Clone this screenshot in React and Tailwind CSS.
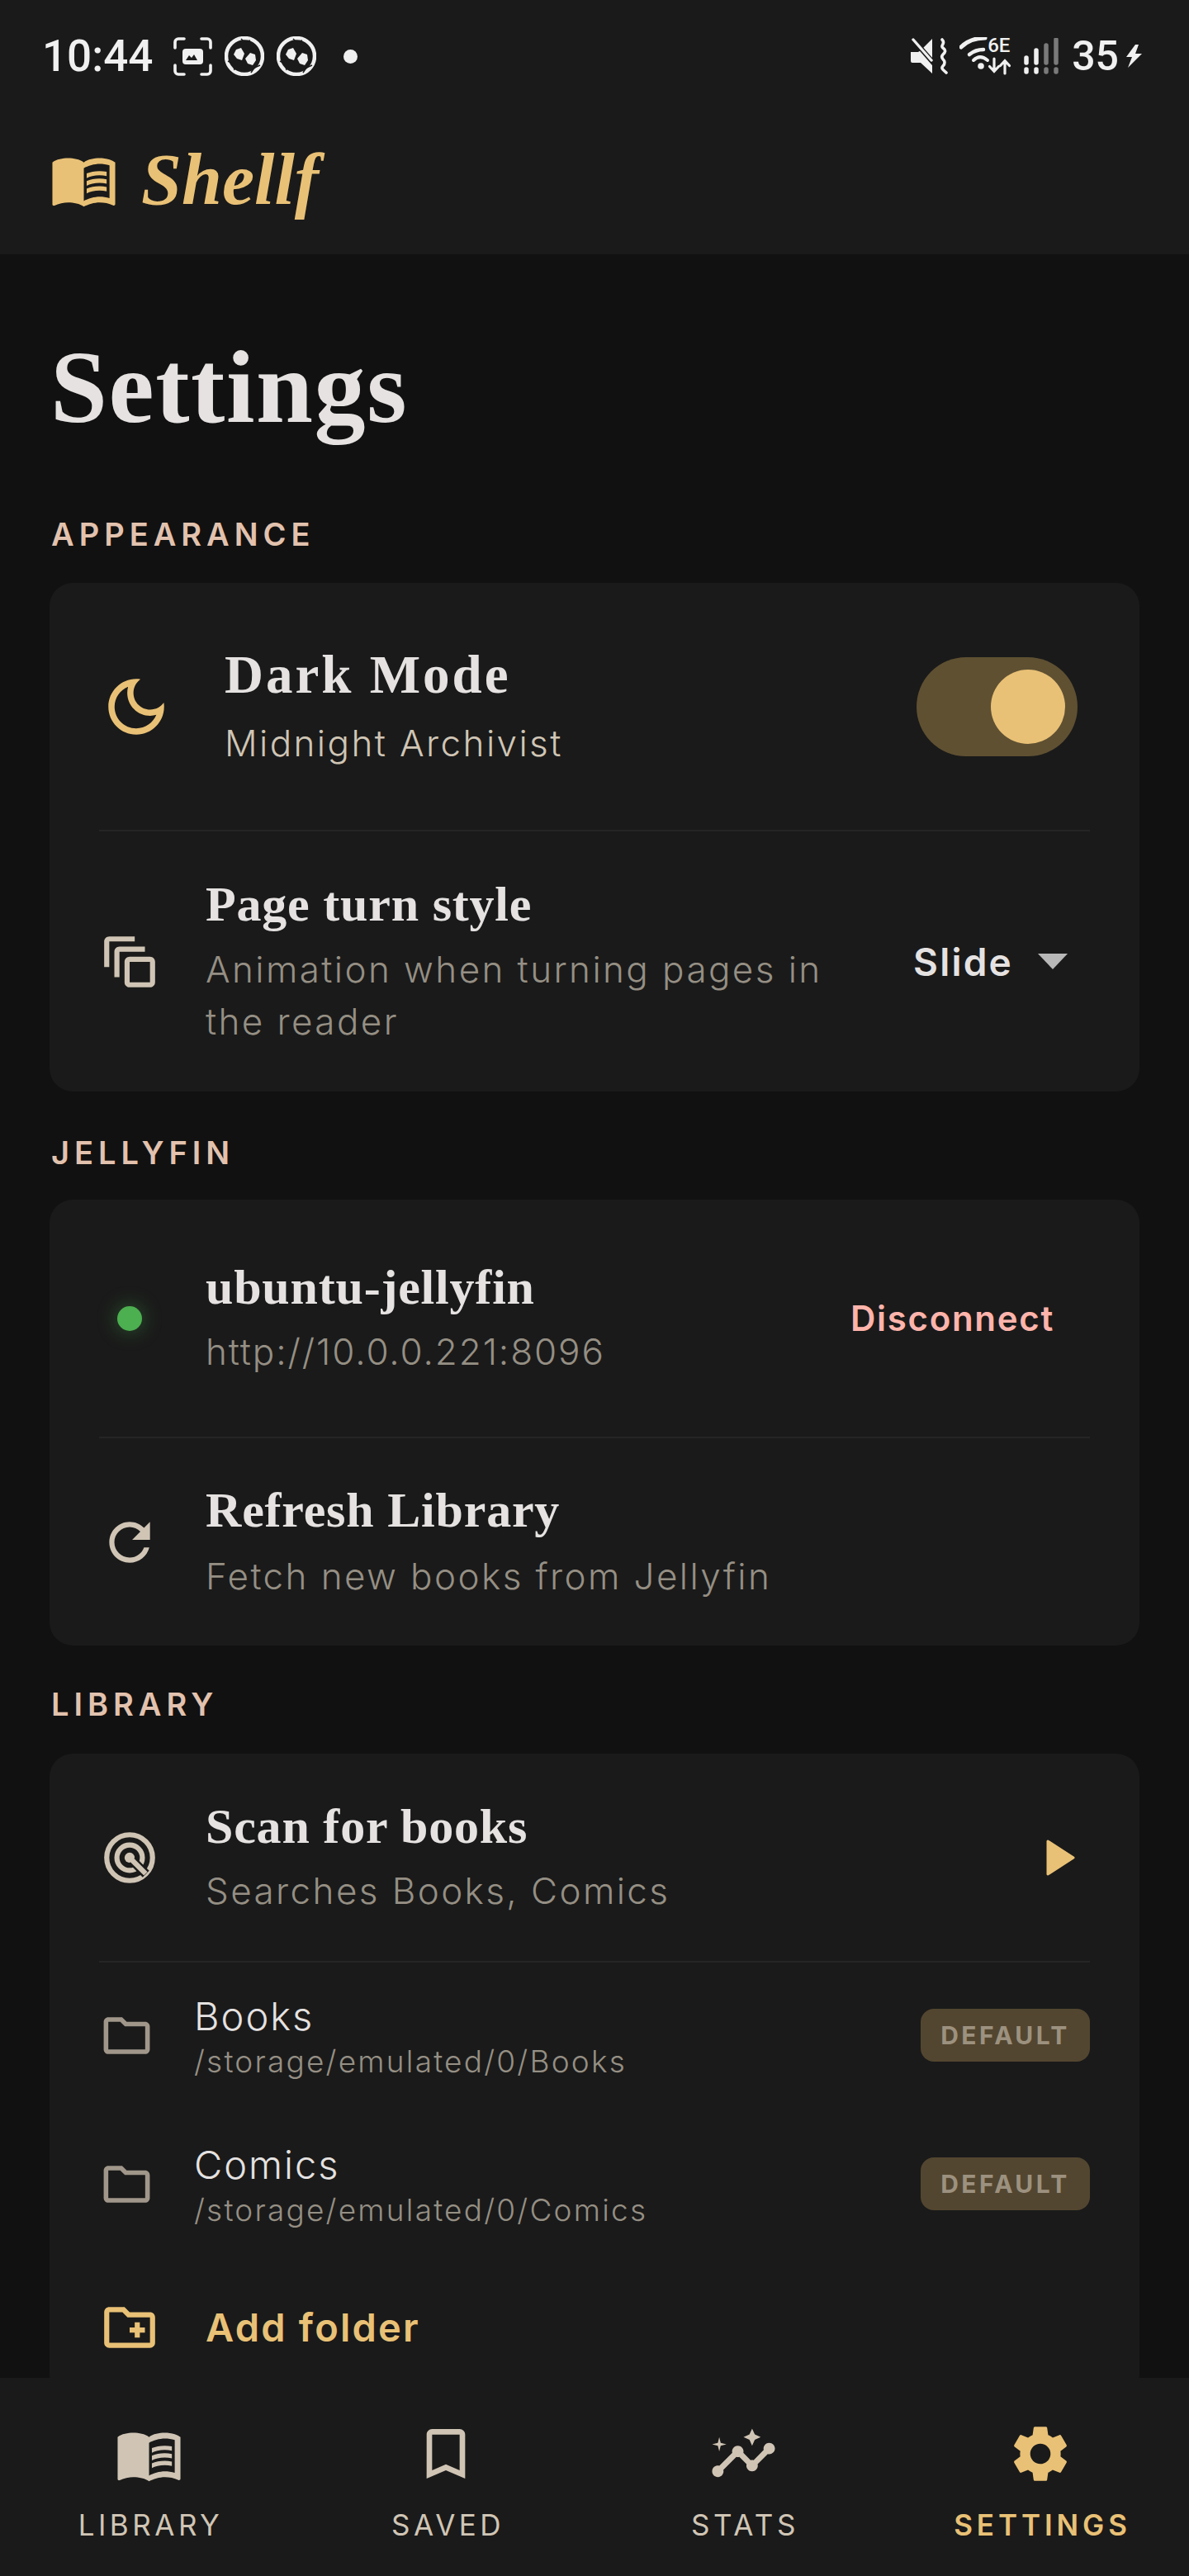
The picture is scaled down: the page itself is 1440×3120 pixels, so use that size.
import React from "react";

const serif = "font-['Liberation_Serif',serif]";
const sans = "font-['Inter',sans-serif]";

const P = {
  book: ["M21 5c-1.11-.35-2.33-.5-3.5-.5-1.95 0-4.05.4-5.5 1.5-1.45-1.1-3.55-1.5-5.5-1.5S2.45 4.9 1 6v14.65c0 .25.25.5.5.5.1 0 .15-.05.25-.05C3.1 20.45 5.05 20 6.5 20c1.95 0 4.05.4 5.5 1.5 1.35-.85 3.8-1.5 5.5-1.5 1.65 0 3.35.3 4.75 1.05.1.05.15.05.25.05.25 0 .5-.25.5-.5V6c-.6-.45-1.25-.75-2-1zm0 13.5c-1.1-.35-2.3-.5-3.5-.5-1.7 0-4.15.65-5.5 1.5V8c1.35-.85 3.8-1.5 5.5-1.5 1.2 0 2.4.15 3.5.5v11.5z", "M17.5 10.5c.88 0 1.73.09 2.5.26V9.24c-.79-.15-1.64-.24-2.5-.24-1.7 0-3.24.29-4.5.83v1.66c1.13-.64 2.7-.99 4.5-.99zM13 12.49v1.66c1.13-.64 2.7-.99 4.5-.99.88 0 1.73.09 2.5.26V11.9c-.79-.15-1.64-.24-2.5-.24-1.7 0-3.24.3-4.5.83zM17.5 14.33c-1.7 0-3.24.29-4.5.83v1.66c1.13-.64 2.7-.99 4.5-.99.88 0 1.73.09 2.5.26v-1.52c-.79-.16-1.64-.24-2.5-.24z"],
  moon: ["M9.37 5.51c-.18.64-.27 1.31-.27 1.99 0 4.08 3.32 7.4 7.4 7.4.68 0 1.35-.09 1.99-.27C17.45 17.19 14.93 19 12 19c-3.86 0-7-3.14-7-7 0-2.93 1.81-5.45 4.37-6.49zM12 3c-4.97 0-9 4.03-9 9s4.03 9 9 9 9-4.03 9-9c0-.46-.04-.92-.1-1.36-.98 1.37-2.58 2.26-4.4 2.26-2.98 0-5.4-2.42-5.4-5.4 0-1.81.89-3.42 2.26-4.4-.44-.06-.9-.1-1.36-.1z"],
  pages: ["M14 2H4c-1.11 0-2 .9-2 2v10h2V4h10V2zm4 4H8c-1.11 0-2 .9-2 2v10h2V8h10V6zm2 4h-8c-1.11 0-2 .9-2 2v8c0 1.1.89 2 2 2h8c1.1 0 2-.9 2-2v-8c0-1.1-.9-2-2-2zm0 10h-8v-8h8v8z"],
  refresh: ["M17.65 6.35C16.2 4.9 14.21 4 12 4c-4.42 0-7.99 3.58-7.99 8s3.57 8 7.99 8c3.73 0 6.84-2.55 7.73-6h-2.08c-.82 2.33-3.04 4-5.65 4-3.31 0-6-2.69-6-6s2.69-6 6-6c1.66 0 3.14.69 4.22 1.78L13 11h7V4l-2.35 2.35z"],
  folder: ["M9.17 6l2 2H20v10H4V6h5.17M10 4H4c-1.1 0-1.99.9-1.99 2L2 18c0 1.1.9 2 2 2h16c1.1 0 2-.9 2-2V8c0-1.1-.9-2-2-2h-8l-2-2z"],
  add: ["M20 6h-8l-2-2H4c-1.11 0-1.99.89-1.99 2L2 18c0 1.11.89 2 2 2h16c1.11 0 2-.89 2-2V8c0-1.11-.89-2-2-2zm0 12H4V6h5.17l2 2H20v10zm-8-4h2v2h2v-2h2v-2h-2v-2h-2v2h-2z"],
  bookmark: ["M17 3H7c-1.1 0-1.99.9-1.99 2L5 21l7-3 7 3V5c0-1.1-.9-2-2-2zm0 15l-5-2.18L7 18V5h10v13z"],
  insights: ["M21 8c-1.45 0-2.26 1.44-1.93 2.51l-3.55 3.56c-.3-.09-.74-.09-1.04 0l-2.55-2.55C12.27 10.45 11.46 9 10 9c-1.45 0-2.27 1.44-1.93 2.52l-4.56 4.55C2.44 15.74 1 16.55 1 18c0 1.1.9 2 2 2 1.45 0 2.26-1.44 1.93-2.51l4.55-4.56c.3.09.74.09 1.04 0l2.55 2.55C12.73 16.55 13.54 18 15 18c1.45 0 2.27-1.44 1.93-2.52l3.56-3.55c1.07.33 2.51-.48 2.51-1.93 0-1.1-.9-2-2-2z", "M15 9l.94-2.07L18 6l-2.06-.93L15 3l-.92 2.07L12 6l2.08.93zM3.5 11L4 9l2-.5L4 8l-.5-2L3 8l-2 .5L3 9z"],
  gear: ["M19.14 12.94c.04-.3.06-.61.06-.94 0-.32-.02-.64-.07-.94l2.03-1.58c.18-.14.23-.41.12-.61l-1.92-3.32c-.12-.22-.37-.29-.59-.22l-2.39.96c-.5-.38-1.03-.7-1.62-.94l-.36-2.54c-.04-.24-.24-.41-.48-.41h-3.84c-.24 0-.43.17-.47.41l-.36 2.54c-.59.24-1.13.57-1.62.94l-2.39-.96c-.22-.08-.47 0-.59.22L2.74 8.87c-.12.21-.08.47.12.61l2.03 1.58c-.05.3-.09.63-.09.94s.02.64.07.94l-2.03 1.58c-.18.14-.23.41-.12.61l1.92 3.32c.12.22.37.29.59.22l2.39-.96c.5.38 1.03.7 1.62.94l.36 2.54c.05.24.24.41.48.41h3.84c.24 0 .44-.17.47-.41l.36-2.54c.59-.24 1.13-.56 1.62-.94l2.39.96c.22.08.47 0 .59-.22l1.92-3.32c.12-.22.07-.47-.12-.61l-2.01-1.58zM12 15.6c-1.98 0-3.6-1.62-3.6-3.6s1.62-3.6 3.6-3.6 3.6 1.62 3.6 3.6-1.62 3.6-3.6 3.6z"],
};

function Ic({ d, className }) {
  return (
    <svg viewBox="0 0 24 24" fill="currentColor" className={"shrink-0 " + className}>
      {d.map((p, i) => <path key={i} d={p} />)}
    </svg>
  );
}

function Radar({ className }) {
  return (
    <svg viewBox="0 0 24 24" fill="none" stroke="currentColor" strokeWidth="2" className={"shrink-0 " + className}>
      <circle cx="12" cy="12" r="9" />
      <circle cx="12" cy="12" r="5" />
      <circle cx="12" cy="12" r="2" fill="currentColor" stroke="none" />
      <path d="M13 13 18.4 18.4" stroke="#1a1a1a" strokeWidth="3.6" />
      <path d="M12.5 12.5 18.3 18.3" />
    </svg>
  );
}

function ScreenshotIcon() {
  return (
    <svg viewBox="0 0 47 47" fill="none" className="w-[47px] h-[47px]" stroke="#f0f0f0" strokeWidth="3.6" strokeLinecap="round">
      <path d="M2 13V6a4 4 0 0 1 4-4h7M34 2h7a4 4 0 0 1 4 4v7M45 34v7a4 4 0 0 1-4 4h-7M13 45H6a4 4 0 0 1-4-4v-7" />
      <rect x="11" y="14" width="25" height="19" rx="4" fill="#f0f0f0" stroke="none" />
      <path d="M15 28l4-6 3 3 3-4 4 7z" fill="#1a1a1a" stroke="none" />
    </svg>
  );
}

function Ball() {
  return (
    <svg viewBox="0 0 48 48" className="w-[48px] h-[48px]">
      <circle cx="24" cy="24" r="22" fill="none" stroke="#f0f0f0" strokeWidth="4.5" />
      <path d="M14 16l6-2 4 7-3 8-6-2-4-5z" fill="#f0f0f0" />
      <path d="M31 20l6 2 1 7-4 6-6-2-3-6z" fill="#f0f0f0" />
      <path d="M20 3l4 4 7-2M4 30l6 3 2 8M32 44l4-6 7-3" fill="none" stroke="#1a1a1a" strokeWidth="1.4" />
    </svg>
  );
}

function RightStatus() {
  return (
    <div className="flex items-center">
      <svg viewBox="0 0 46 44" className="w-[46px] h-[44px]">
        <path d="M1 17h9l3-2 14-14v42L13 30H3a2 2 0 0 1-2-2z" fill="#f0f0f0" />
        <path d="M4 2l26 30" stroke="#1a1a1a" strokeWidth="6" />
        <path d="M4 2l22 25" stroke="#f0f0f0" strokeWidth="3.4" strokeLinecap="round" />
        <path d="M39 2c5 5-3 7 1 10s3 5 0 8 0 6 1 7 2 4-1 7 1 5 4 8" fill="none" stroke="#f0f0f0" strokeWidth="3.6" strokeLinecap="round" />
      </svg>
      <div className="relative w-[64px] h-[46px] ml-[14px]">
        <svg viewBox="0 0 64 46" className="w-[64px] h-[46px]">
          <path d="M2 12C9 5 20 1 31 1" fill="none" stroke="#f0f0f0" strokeWidth="5" strokeLinecap="round" />
          <path d="M12 21c5-4 10-6 17-6" fill="none" stroke="#f0f0f0" strokeWidth="4.5" strokeLinecap="round" />
          <path d="M17 28c5-5 11-5 17 0" fill="none" stroke="#f0f0f0" strokeWidth="4" strokeLinecap="round" />
          <circle cx="26" cy="35" r="3.8" fill="#f0f0f0" />
          <path d="M42 26v15m-5.500-5.500 5.500 6 5.500-6M55 44V29m-5.500 5.500 5.500-6 5.500 6" fill="none" stroke="#f0f0f0" strokeWidth="3.200" strokeLinecap="round" />
        </svg>
        <span className="absolute left-[34px] top-[-1px] font-['Roboto',sans-serif] font-medium text-[24px] leading-[22px] text-[#f0f0f0]">6E</span>
      </div>
      <svg viewBox="0 0 42 44" className="w-[42px] h-[44px] ml-[14px]">
        <path d="M3 24v6M3 38v3M15 15v15M15 38v3" stroke="#f0f0f0" strokeWidth="5.500" strokeLinecap="round" />
        <path d="M27 9v21M27 38v3M39 2v28M39 38v3" stroke="#7a7a7a" strokeWidth="5.500" strokeLinecap="round" />
      </svg>
      <span className="ml-[16px] font-['Roboto',sans-serif] text-[50px] leading-[56px] font-medium text-[#f0f0f0]">35</span>
      <svg viewBox="0 0 22 28" className="w-[22px] h-[28px] ml-[7px]">
        <path d="M13 0 2 15h7L4 28 21 11h-8l4-11z" fill="#f0f0f0" />
      </svg>
    </div>
  );
}

function Title({ children }) {
  return <div className={`${serif} font-bold text-[60px] leading-[70px] tracking-[0.800px] text-[#e5e2e1]`}>{children}</div>;
}
function Sub({ children, tight }) {
  return <div className={`${sans} text-[44px] leading-[63px] ${tight ? "tracking-[1.900px]" : "tracking-[2.400px]"} font-light text-[#958f84]`}>{children}</div>;
}
function Label({ children, className }) {
  return <div className={`${sans} font-semibold text-[38px] leading-[50px] tracking-[6px] pl-[2px] text-[#e2c2ae] ${className}`}>{children}</div>;
}
const Divider = () => <div className="h-[2px] mx-[60px] bg-[#252525]" />;

function FolderRow({ name, path }) {
  return (
    <div className="flex items-center h-[180px] pl-[60px] pr-[60px]">
      <Ic d={P.folder} className="w-[67px] h-[67px] text-[#a0978a]" />
      <div className="flex-1 ml-[48px] translate-y-[4px]">
        <div className={`${sans} font-light text-[47px] leading-[56px] tracking-[2px] text-[#e5e2e1]`}>{name}</div>
        <div className={`${sans} font-light text-[37px] leading-[54px] tracking-[2.200px] text-[#958f84]`}>{path}</div>
      </div>
      <div className={`${sans} w-[205px] h-[64px] rounded-[16px] bg-[#534630] flex items-center justify-center font-bold text-[30px] tracking-[3.400px] text-[#9c917f]`}>DEFAULT</div>
    </div>
  );
}

function Nav({ label, active, icon }) {
  const c = active ? "text-[#e9c176]" : "text-[#d0c5b5]";
  return (
    <div className={`flex flex-col items-center ${c}`}>
      <div className="h-[88px] flex items-center justify-center mt-[48px]">{icon}</div>
      <div className={`${sans} text-[35px] leading-[42px] mt-[21px] pl-[5px] ${active ? "font-semibold tracking-[4.900px]" : "font-normal tracking-[4.500px]"}`}>{label}</div>
    </div>
  );
}

export default function App() {
  return (
    <div className="w-[1440px] h-[3120px] flex flex-col overflow-hidden bg-[#111111]">
      <header className="bg-[#1a1a1a] h-[308px] shrink-0">
        <div className="h-[136px] flex items-center justify-between pl-[51px] pr-[56px]">
          <div className="flex items-center">
            <span className="font-['Roboto',sans-serif] font-medium text-[53px] leading-[60px] text-[#f0f0f0] w-[159px]">10:44</span>
            <ScreenshotIcon />
            <span className="ml-[15px]"><Ball /></span>
            <span className="ml-[15px]"><Ball /></span>
            <span className="ml-[33px] w-[17px] h-[17px] rounded-full bg-[#f0f0f0]" />
          </div>
          <RightStatus />
        </div>
        <div className="h-[172px] flex items-start pl-[60px]">
          <Ic d={P.book} className="w-[83px] h-[83px] text-[#e9c176] mt-[40px]" />
          <span className={`${serif} font-bold italic text-[88px] leading-[96px] text-[#e9c176] ml-[28px] mt-[34px]`}>Shellf</span>
        </div>
      </header>

      <main className="flex-1 min-h-0 overflow-hidden px-[60px]">
        <h1 className={`${serif} font-bold text-[124px] leading-[140px] tracking-[1.600px] pl-[1px] text-[#e5e2e1] mt-[92px]`}>Settings</h1>

        <Label className="mt-[82px]">APPEARANCE</Label>
        <section className="mt-[34px] rounded-[28px] bg-[#1a1a1a]">
          <div className="h-[299px] flex items-center pl-[60px] pr-[75px]">
            <Ic d={P.moon} className="w-[90px] h-[90px] text-[#e9c176]" />
            <div className="flex-1 ml-[62px]">
              <div className={`${serif} font-bold text-[65px] leading-[76px] tracking-[3px] text-[#e5e2e1] mb-[14px]`}>Dark Mode</div>
              <div className={`${sans} text-[44px] leading-[63px] tracking-[2.400px] font-light text-[#d0c5b5]`}>Midnight Archivist</div>
            </div>
            <div className="relative w-[195px] h-[120px] rounded-full bg-[#5f5032]">
              <div className="absolute right-[15px] top-[15px] w-[90px] h-[90px] rounded-full bg-[#e9c176]" />
            </div>
          </div>
          <Divider />
          <div className="h-[315px] flex items-center pl-[60px] pr-[87px]">
            <Ic d={P.pages} className="w-[74px] h-[74px] text-[#d0c5b5]" />
            <div className="flex-1 ml-[55px] mr-[48px]">
              <div className="mb-[13px]"><Title>Page turn style</Title></div>
              <Sub>Animation when turning pages in the reader</Sub>
            </div>
            <span className={`${sans} font-semibold text-[46px] leading-[60px] tracking-[2.200px] text-[#e5e2e1]`}>Slide</span>
            <svg viewBox="0 0 36 19" className="w-[36px] h-[19px] ml-[30px]"><path d="M0 0h36L18 19z" fill="#b8b8b8" /></svg>
          </div>
        </section>

        <Label className="mt-[49px]">JELLYFIN</Label>
        <section className="mt-[32px] rounded-[28px] bg-[#1a1a1a]">
          <div className="h-[287px] flex items-center pl-[60px] pr-[103px]">
            <div className="w-[74px] h-[74px] shrink-0 flex items-center justify-center">
              <div className="w-[30px] h-[30px] rounded-full bg-[#4caf50] shadow-[0_0_24px_rgba(76,175,80,0.45)]" />
            </div>
            <div className="flex-1 ml-[55px]">
              <div className="mb-[12px]"><Title>ubuntu-jellyfin</Title></div>
              <Sub tight>http://10.0.0.221:8096</Sub>
            </div>
            <span className={`${sans} font-semibold text-[42px] leading-[60px] tracking-[1.700px] text-[#ffb4ab]`}>Disconnect</span>
          </div>
          <Divider />
          <div className="h-[251px] flex items-center pl-[60px] pr-[60px]">
            <Ic d={P.refresh} className="w-[74px] h-[74px] text-[#d0c5b5]" />
            <div className="flex-1 ml-[55px]">
              <div className="mb-[14px]"><Title>Refresh Library</Title></div>
              <Sub>Fetch new books from Jellyfin</Sub>
            </div>
          </div>
        </section>

        <Label className="mt-[46px]">LIBRARY</Label>
        <section className="mt-[35px] rounded-[28px] bg-[#1a1a1a]">
          <div className="h-[251px] flex items-center pl-[60px] pr-[78px]">
            <Radar className="w-[74px] h-[74px] text-[#d0c5b5]" />
            <div className="flex-1 ml-[55px]">
              <div className="mb-[12px]"><Title>Scan for books</Title></div>
              <Sub>Searches Books, Comics</Sub>
            </div>
            <svg viewBox="0 0 35 44" className="w-[35px] h-[44px]"><path d="M2 2 33 22 2 42z" fill="#e9c176" stroke="#e9c176" strokeWidth="3" strokeLinejoin="round" /></svg>
          </div>
          <Divider />
          <div className="-mt-[2px]">
            <FolderRow name="Books" path="/storage/emulated/0/Books" />
            <FolderRow name="Comics" path="/storage/emulated/0/Comics" />
          </div>
          <div className="h-[168px] flex items-center pl-[60px]">
            <Ic d={P.add} className="w-[74px] h-[74px] text-[#e9c176]" />
            <span className={`${sans} ml-[55px] font-semibold text-[47px] leading-[60px] tracking-[2.200px] text-[#e9c176]`}>Add folder</span>
          </div>
        </section>
      </main>

      <nav className="h-[240px] shrink-0 bg-[#1a1a1a] grid grid-cols-4">
        <Nav label="LIBRARY" icon={<Ic d={P.book} className="w-[83px] h-[83px]" />} />
        <Nav label="SAVED" icon={<Ic d={P.bookmark} className="w-[80px] h-[80px]" />} />
        <Nav label="STATS" icon={<Ic d={P.insights} className="w-[83px] h-[83px]" />} />
        <Nav label="SETTINGS" active icon={<Ic d={P.gear} className="w-[82px] h-[82px]" />} />
      </nav>
    </div>
  );
}
